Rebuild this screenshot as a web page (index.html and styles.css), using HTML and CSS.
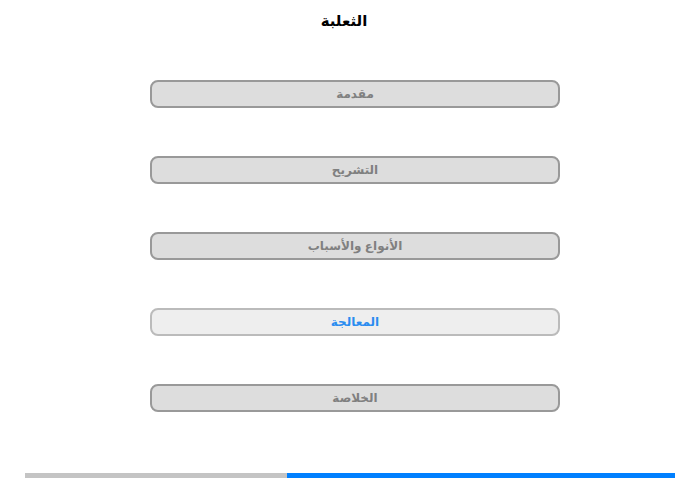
FILE: index.html
```html
<!DOCTYPE html>
<html lang="ar" dir="rtl">
<head>
    <meta charset="UTF-8">
    <meta name="viewport" content="width=device-width, initial-scale=1.0">
    <title>الثعلبة</title>
    <link rel="stylesheet" href="styles.css">
</head>
<body>

    <h1 class="title">الثعلبة</h1>

    <div class="menu">
        <button class="menu-btn">مقدمة</button>
        <button class="menu-btn">التشريح</button>
        <button class="menu-btn">الأنواع والأسباب</button>
        <button class="menu-btn active">المعالجة</button>
        <button class="menu-btn">الخلاصة</button>
    </div>

    <div class="progress" dir="ltr">
        <div class="progress-fill" style="width: 59.7%"></div>
    </div>

</body>
</html>
```

FILE: styles.css
```css
body {
    font-family: "Liberation Sans", "DejaVu Sans", Arial, sans-serif;
    background: #fff;
    margin: 0;
    height: 480px;
}
.title {
    text-align: center;
    font-size: 15px;
    line-height: 20px;
    font-weight: bold;
    color: #000;
    margin: 11px 12px 0 0;
}
.menu {
    width: 410px;
    margin: 49px 140px 0 0;
    display: flex;
    flex-direction: column;
    gap: 48px;
}
.menu-btn {
    height: 28px;
    background: #ddd;
    border: 2px solid #999;
    border-radius: 8px;
    color: #808080;
    font-family: inherit;
    font-size: 12px;
    font-weight: bold;
    padding: 0;
    cursor: pointer;
}
.menu-btn.active {
    background: #eee;
    border-color: #bbb;
    color: #2a8cf0;
}
.progress {
    width: 650px;
    height: 5px;
    margin: 61px auto 0;
    background: #c4c4c4;
    display: flex;
    justify-content: flex-end;
}
.progress-fill {
    height: 100%;
    background: #0080ff;
}
```
